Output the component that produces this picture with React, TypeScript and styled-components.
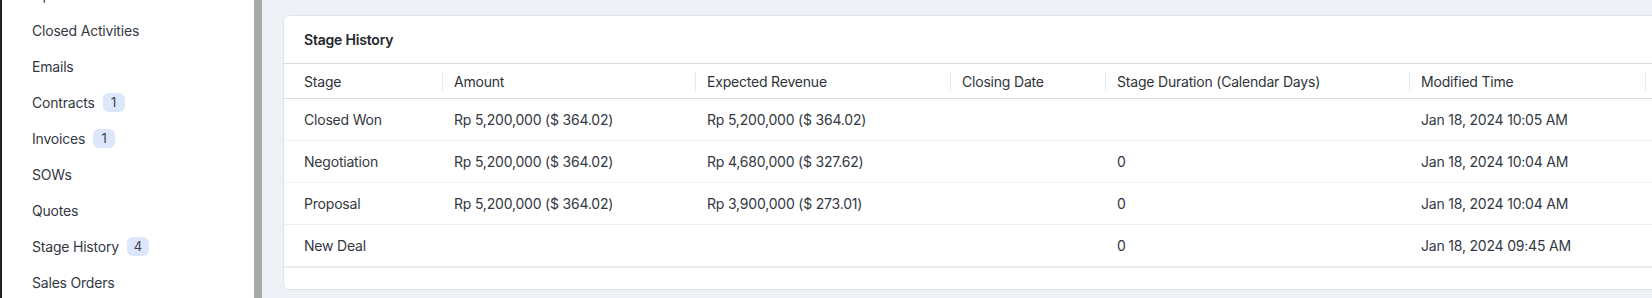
import React from "react"
import styled, { createGlobalStyle } from "styled-components"

const GlobalStyle = createGlobalStyle`
  html, body {
    margin: 0;
    padding: 0;
    background: #edf0f5;
    overflow: hidden;
  }
  body {
    font-family: Inter, "Noto Sans", "Liberation Sans", sans-serif;
    font-size: 14px;
    letter-spacing: -0.2px;
    color: #2f333a;
  }
`

const Page = styled.div`
  display: flex;
  height: 298px;
  overflow: hidden;
`

const Sidebar = styled.nav`
  width: 252px;
  flex: none;
  background: #fff;
  border-left: 2px solid #1f1f1f;
  overflow: hidden;
`

const NavList = styled.ul`
  list-style: none;
  margin: -24px 0 0;
  padding: 0;
`

const NavItem = styled.li`
  display: flex;
  align-items: center;
  gap: 8px;
  height: 36px;
  padding-left: 30px;
  color: #333842;
`

const Count = styled.span`
  display: inline-flex;
  align-items: center;
  justify-content: center;
  min-width: 22px;
  height: 19px;
  border-radius: 6px;
  background: #dde7fc;
  color: #3b4150;
  font-size: 13px;
`

const Scrollbar = styled.div`
  width: 8px;
  flex: none;
  background: #a9a9a9;
`

const Main = styled.main`
  flex: 1;
  min-width: 0;
  padding: 15px 0 0 21px;
  overflow: hidden;
`

const Card = styled.section`
  width: 1500px;
  background: #fff;
  border: 1px solid #dfe4ec;
  border-radius: 6px;
  padding-bottom: 21px;
`

const CardTitle = styled.h2`
  margin: 0;
  height: 47px;
  display: flex;
  align-items: center;
  padding-left: 20px;
  font-size: 14px;
  font-weight: 600;
  color: #22262d;
  border-bottom: 1px solid #d6dce6;
`

const Table = styled.div`
  display: grid;
  grid-template-columns: 159px 253px 255px 155px 304px 236px 1fr;
`

const HeadCell = styled.div<{ $first?: boolean }>`
  position: relative;
  height: 34px;
  display: flex;
  align-items: center;
  padding-left: ${(p) => (p.$first ? "20px" : "11px")};
  border-bottom: 1px solid #d6dce6;
  color: #2f333a;
  &::after {
    content: "";
    position: absolute;
    right: 0;
    top: 7px;
    bottom: 7px;
    width: 1px;
    background: #e8ebf0;
  }
`

const Cell = styled.div<{ $first?: boolean; $last?: boolean }>`
  height: 41px;
  display: flex;
  align-items: center;
  padding-left: ${(p) => (p.$first ? "20px" : "11px")};
  border-bottom: ${(p) => (p.$last ? "2px solid #e9edf2" : "1px solid #edf0f4")};
  color: #333842;
  white-space: nowrap;
`

const navItems: { label: string; count?: number }[] = [
  { label: "Open Activities" },
  { label: "Closed Activities" },
  { label: "Emails" },
  { label: "Contracts", count: 1 },
  { label: "Invoices", count: 1 },
  { label: "SOWs" },
  { label: "Quotes" },
  { label: "Stage History", count: 4 },
  { label: "Sales Orders" },
]

const headers = [
  "Stage",
  "Amount",
  "Expected Revenue",
  "Closing Date",
  "Stage Duration (Calendar Days)",
  "Modified Time",
  "",
]

const rows = [
  ["Closed Won", "Rp 5,200,000 ($ 364.02)", "Rp 5,200,000 ($ 364.02)", "", "", "Jan 18, 2024 10:05 AM", ""],
  ["Negotiation", "Rp 5,200,000 ($ 364.02)", "Rp 4,680,000 ($ 327.62)", "", "0", "Jan 18, 2024 10:04 AM", ""],
  ["Proposal", "Rp 5,200,000 ($ 364.02)", "Rp 3,900,000 ($ 273.01)", "", "0", "Jan 18, 2024 10:04 AM", ""],
  ["New Deal", "", "", "", "0", "Jan 18, 2024 09:45 AM", ""],
]

export default function App() {
  return (
    <>
      <GlobalStyle />
      <Page>
        <Sidebar>
          <NavList>
            {navItems.map((item) => (
              <NavItem key={item.label}>
                {item.label}
                {item.count !== undefined && <Count>{item.count}</Count>}
              </NavItem>
            ))}
          </NavList>
        </Sidebar>
        <Scrollbar />
        <Main>
          <Card>
            <CardTitle>Stage History</CardTitle>
            <Table>
              {headers.map((h, i) => (
                <HeadCell key={i} $first={i === 0}>
                  {h}
                </HeadCell>
              ))}
              {rows.map((row, r) =>
                row.map((value, c) => (
                  <Cell key={`${r}-${c}`} $first={c === 0} $last={r === rows.length - 1}>
                    {value}
                  </Cell>
                ))
              )}
            </Table>
          </Card>
        </Main>
      </Page>
    </>
  )
}
